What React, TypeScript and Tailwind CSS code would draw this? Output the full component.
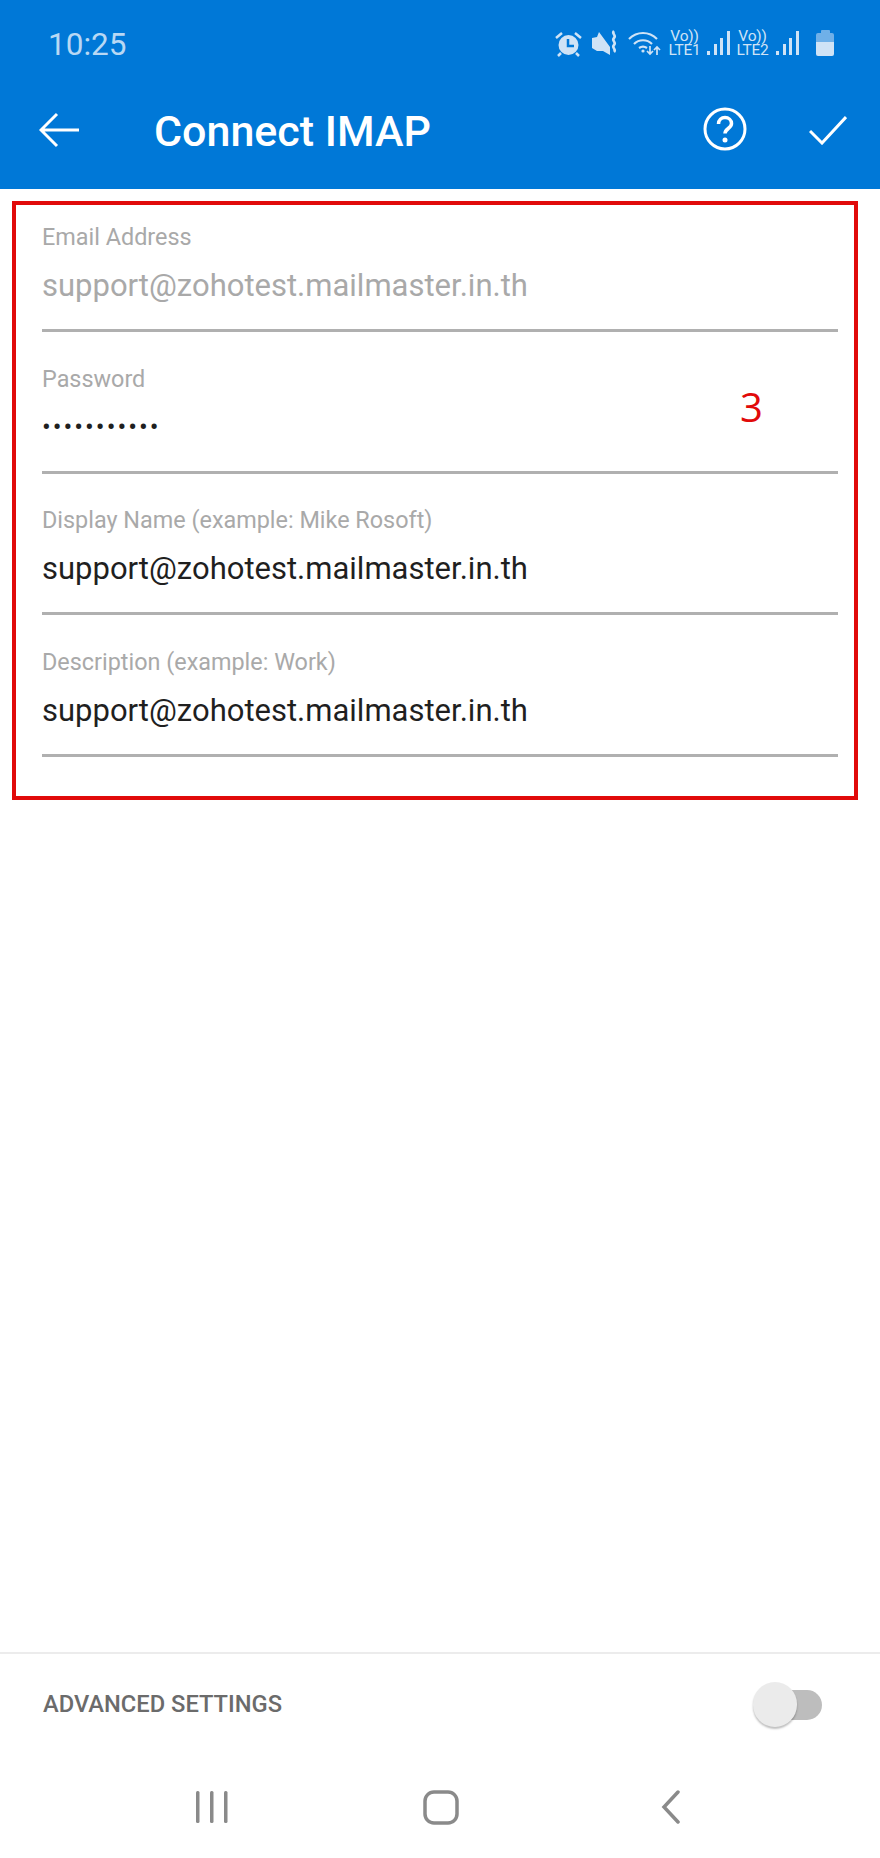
import React from "react";

const fields = [
  { label: "Email Address", value: "support@zohotest.mailmaster.in.th", muted: true },
  { label: "Password", value: "•••••••••••", password: true },
  { label: "Display Name (example: Mike Rosoft)", value: "support@zohotest.mailmaster.in.th" },
  { label: "Description (example: Work)", value: "support@zohotest.mailmaster.in.th" },
];

function SignalBars() {
  return (
    <svg width="23" height="26" viewBox="0 0 23 26" fill="#cfe3f6">
      <rect x="0" y="21" width="3" height="4" />
      <rect x="7" y="14" width="3" height="11" />
      <rect x="13" y="8" width="3" height="17" />
      <rect x="20" y="1" width="3" height="24" />
    </svg>
  );
}

function Lte({ n }: { n: string }) {
  return (
    <div className="flex w-[33px] flex-col items-center text-[15.500px] leading-[14px] tracking-[-0.2px] text-[#cfe3f6]">
      <span>Vo))</span>
      <span>LTE{n}</span>
    </div>
  );
}

function StatusIcons() {
  return (
    <div className="flex items-center">
      {/* alarm */}
      <svg width="27" height="27" viewBox="0 0 27 27" className="mr-[10px]">
        <circle cx="13.500" cy="15" r="10" fill="#cfe3f6" />
        <path d="M13 9v7h6" fill="none" stroke="#0078d7" strokeWidth="2.500" />
        <path d="M1 8l6-5M26 8l-6-5M6 23l-3 3M21 23l3 3" stroke="#cfe3f6" strokeWidth="2.500" />
      </svg>
      {/* vibrate / mute */}
      <svg width="26" height="26" viewBox="0 0 26 26" className="mr-[10px]">
        <path d="M0 8l5-1 2-5 11 15v8l-7-4-6 0-5-3z" fill="#cfe3f6" />
        <path d="M22 1c-3 3 3 4 0 7s3 4 0 7 3 4 0 7" fill="none" stroke="#cfe3f6" strokeWidth="2.600" />
      </svg>
      {/* wifi */}
      <svg width="33" height="26" viewBox="0 0 33 26" className="mr-[7px]" fill="none" stroke="#cfe3f6" strokeWidth="2.200">
        <path d="M1 9c8-8 20-8 28 0" />
        <path d="M6 14c5-5 13-5 18 0" />
        <path d="M11 18c3-2 5-2 8 0" />
        <circle cx="15" cy="21" r="1.600" fill="#cfe3f6" stroke="none" />
        <path d="M22 16v8M19 21l3 3 3-3M29 25v-8M26 20l3-3 3 3" strokeWidth="1.700" />
      </svg>
      <Lte n="1" />
      <div className="ml-[6px] mr-[6px]">
        <SignalBars />
      </div>
      <Lte n="2" />
      <div className="ml-[7px]">
        <SignalBars />
      </div>
      {/* battery */}
      <div className="ml-[17px] flex flex-col items-center">
        <div className="h-[3px] w-[9px] rounded-t-[1px] bg-[#6fb0e8]" />
        <div className="h-[9px] w-[18px] rounded-t-[2px] bg-[#6fb0e8]" />
        <div className="h-[14px] w-[18px] rounded-b-[2px] bg-[#cfe3f6]" />
      </div>
    </div>
  );
}

export default function App() {
  return (
    <div className="flex h-[1858px] w-[880px] flex-col overflow-hidden bg-white font-['Roboto',sans-serif]">
      <header className="h-[189px] bg-[#0078d7]">
        <div className="flex h-[86px] items-center justify-between pl-[48px] pr-[46px]">
          <span className="pt-[4px] text-[31.500px] text-[#b8d8f4]">10:25</span>
          <StatusIcons />
        </div>
        <div className="flex h-[88px] items-center pl-[39px] pr-[33px]">
          <svg width="40" height="36" viewBox="0 0 40 36" fill="none" stroke="white" strokeWidth="3">
            <path d="M40 18H3M18 2L2 18l16 16" />
          </svg>
          <h1 className="ml-[75px] flex-1 pt-[3px] text-[43px] font-medium text-white">Connect IMAP</h1>
          <svg width="44" height="44" viewBox="0 0 44 44" fill="none" className="mb-[3px] mr-[62px]">
            <circle cx="22" cy="22" r="20" stroke="white" strokeWidth="3" />
            <path d="M15.500 17c0-4 3-6.500 6.500-6.500s6.500 2.500 6.500 6c0 5-6.500 5-6.500 10" stroke="white" strokeWidth="3.500" />
            <circle cx="22" cy="33" r="2.500" fill="white" />
          </svg>
          <svg width="38" height="30" viewBox="0 0 38 30" fill="none" stroke="white" strokeWidth="3">
            <path d="M1 16l12 12L37 2" />
          </svg>
        </div>
      </header>

      <main className="relative ml-[12px] mr-[22px] mt-[12px] h-[599px] border-[4px] border-[#e10a0a] pl-[26px] pr-[16px] pt-[18px]">
        {fields.map((f) => (
          <div key={f.label} className="h-[141.7px]">
            <div className="h-[28px] text-[23.400px] leading-[28px] text-[#a9a9a9]">{f.label}</div>
            <div
              className={`flex h-[81px] items-center border-b-[3px] border-[#b0b0b0] pb-[8px] text-[31px] ${
                f.muted ? "text-[#a9a9a9]" : "text-[#1f1f1f]"
              }`}
            >
              {f.password ? <span className="text-[26px] tracking-[2px]">{f.value}</span> : f.value}
            </div>
          </div>
        ))}
        <span className="absolute left-[724px] top-[177px] font-['Open_Sans',sans-serif] text-[40px] leading-[50px] text-[#e10a0a]">
          3
        </span>
      </main>

      <div className="flex-1" />

      <section className="flex h-[104px] items-center justify-between border-t-2 border-[#ececec] pl-[43px] pr-[58px]">
        <span className="text-[23.700px] font-medium text-[#6b6b6b]">ADVANCED SETTINGS</span>
        <div className="relative h-[30px] w-[53px] rounded-r-full bg-[#bdbdbd]">
          <div className="absolute left-[-16px] top-[-8px] h-[45px] w-[44px] rounded-full bg-[#ebebeb] shadow-[0_2px_2px_rgba(0,0,0,0.25)]" />
        </div>
      </section>

      <nav className="flex h-[102px] items-start pl-[195px] pt-[34px]">
        <svg width="33" height="34" viewBox="0 0 33 34" className="mr-[195px]" fill="#8a8a8a">
          <rect x="1" y="1" width="3.500" height="32" rx="1.500" />
          <rect x="15" y="1" width="3.500" height="32" rx="1.500" />
          <rect x="29" y="1" width="3.500" height="32" rx="1.500" />
        </svg>
        <svg width="36" height="35" viewBox="0 0 36 35" fill="none" className="mr-[201px]">
          <rect x="2" y="2" width="32" height="31" rx="9" stroke="#8a8a8a" strokeWidth="3.500" />
        </svg>
        <svg width="22" height="34" viewBox="0 0 22 34" fill="none">
          <path d="M18 2L4 17l14 15" stroke="#8a8a8a" strokeWidth="3.500" strokeLinecap="round" />
        </svg>
      </nav>
    </div>
  );
}
